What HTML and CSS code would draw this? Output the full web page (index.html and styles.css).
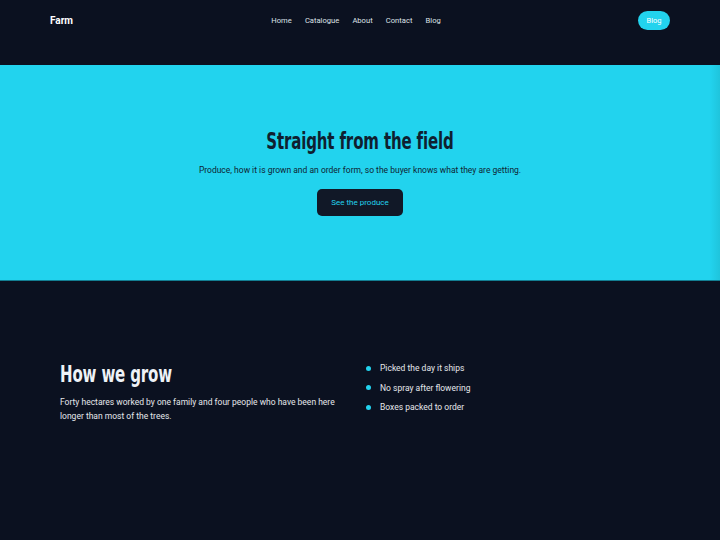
FILE: index.html
```html
<!DOCTYPE html>
<html lang="en">
<head>
<meta charset="utf-8">
<title>Farm</title>
<link rel="stylesheet" href="styles.css">
</head>
<body>
<header class="nav">
  <div class="nav-side"><span class="logo">Farm</span></div>
  <nav class="links">
    <a href="#">Home</a>
    <a href="#">Catalogue</a>
    <a href="#">About</a>
    <a href="#">Contact</a>
    <a href="#">Blog</a>
  </nav>
  <div class="nav-side nav-end"><a class="pill" href="#">Blog</a></div>
</header>
<section class="hero">
  <h1><span>Straight from the field</span></h1>
  <p>Produce, how it is grown and an order form, so the buyer knows what they are getting.</p>
  <a class="btn" href="#">See the produce</a>
</section>
<section class="grow">
  <div class="col">
    <h2><span>How we grow</span></h2>
    <p>Forty hectares worked by one family and four people who have been here longer than most of the trees.</p>
  </div>
  <ul class="list">
    <li>Picked the day it ships</li>
    <li>No spray after flowering</li>
    <li>Boxes packed to order</li>
  </ul>
</section>
</body>
</html>
```
FILE: styles.css
```css
* { box-sizing: border-box; }
html, body { margin: 0; padding: 0; }
body {
  background: #0b1120;
  font-family: Roboto, "Noto Sans", sans-serif;
  color: #e5e7eb;
  min-height: 540px;
}
a { text-decoration: none; }
.nav {
  height: 65px;
  display: flex;
  align-items: flex-start;
  padding: 11px 50px 0;
}
.nav-side {
  flex: 1;
  display: flex;
  line-height: 19px;
}
.nav-end { justify-content: flex-end; }
.logo {
  font-weight: 700;
  font-size: 10px;
  color: #ffffff;
}
.links {
  display: flex;
  gap: 13.2px;
  line-height: 19px;
  margin-right: 8px;
}
.links a {
  color: #dde1e7;
  font-size: 7.6px;
}
.pill {
  background: #22d3ee;
  color: #ffffff;
  font-size: 7.5px;
  padding: 0 8.5px;
  height: 19px;
  line-height: 19px;
  border-radius: 10px;
}
.hero {
  background: linear-gradient(to right, #22d3ee calc(100% - 10px), #1fc4dc 100%);
  height: 216px;
  border-bottom: 1px solid #137e92;
  display: flex;
  flex-direction: column;
  align-items: center;
  padding-top: 61px;
}
.hero h1, .grow h2 {
  margin: 0;
  font-family: "DejaVu Sans", sans-serif;
  font-stretch: condensed;
  font-weight: 700;
  font-size: 23.5px;
  line-height: 30px;
  letter-spacing: -0.2px;
}
.hero h1 span, .grow h2 span {
  display: inline-block;
  transform: scaleX(0.71);
}
.hero h1 { color: #0f1f30; }
.hero h1 span { transform-origin: center; }
.hero p {
  margin: 8px 0 0;
  font-size: 8.5px;
  color: #0f2433;
  line-height: 12px;
}
.btn {
  margin-top: 13px;
  background: #111827;
  color: #22d3ee;
  font-size: 8px;
  width: 86px;
  height: 27px;
  display: flex;
  align-items: center;
  justify-content: center;
  border-radius: 5px;
}
.grow {
  display: grid;
  grid-template-columns: 285px 294px;
  gap: 21px;
  padding: 78px 60px 0;
}
.grow h2 { color: #eef2f7; }
.grow h2 span { transform-origin: left center; }
.grow p {
  margin: 6px 0 0;
  font-size: 8.5px;
  line-height: 14px;
  color: #e5e7eb;
}
.list {
  list-style: none;
  margin: 3px 0 0;
  padding: 0;
}
.list li {
  position: relative;
  font-size: 8.5px;
  line-height: 12px;
  padding-left: 14px;
  margin-bottom: 7.5px;
  color: #e5e7eb;
}
.list li::before {
  content: "";
  position: absolute;
  left: 0;
  top: 3.5px;
  width: 5px;
  height: 5px;
  border-radius: 50%;
  background: #22d3ee;
}
```
